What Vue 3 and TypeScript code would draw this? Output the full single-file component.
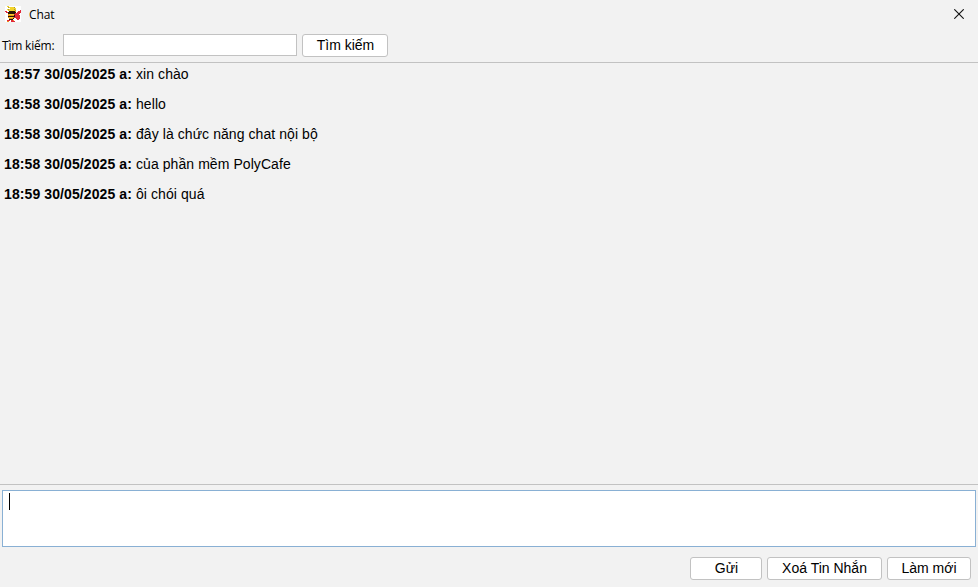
<script setup lang="ts">
import { ref } from 'vue'

interface Message {
  time: string
  sender: string
  text: string
}

const keyword = ref('')

const messages: Message[] = [
  { time: '18:57 30/05/2025', sender: 'a', text: 'xin chào' },
  { time: '18:58 30/05/2025', sender: 'a', text: 'hello' },
  { time: '18:58 30/05/2025', sender: 'a', text: 'đây là chức năng chat nội bộ' },
  { time: '18:58 30/05/2025', sender: 'a', text: 'của phần mềm PolyCafe' },
  { time: '18:59 30/05/2025', sender: 'a', text: 'ôi chói quá' },
]

// 16x16 pixel mascot: a bee with sunglasses and a red cape
const sprite: string[] = [
  '..yy............',
  '...gyyyyyg......',
  '.....yyyyyy.....',
  '..ygyyyyygy.....',
  '...yyyyyyyg....r',
  'rr..kkkkkko..rrr',
  '.rrkkkkkkkk.rrrr',
  '...kkkkkkkrrrrr.',
  '...oyyyyyrrrrr..',
  '...ooooookrrrrr.',
  '...kkkkkkkrrrrr.',
  '...oyyyyorrrrrr.',
  '....ooook..rrrr.',
  '....kkkk....rr..',
  '..rrr.rro.......',
  '..oo..rrrr......',
]
const palette: Record<string, string> = {
  y: '#f3d32a',
  g: '#a39a3c',
  k: '#2a1608',
  o: '#ee8f1e',
  r: '#e0283a',
}
const pixels = sprite.flatMap((row, y) =>
  [...row].map((c, x) => ({ x, y, fill: palette[c] })).filter((p) => p.fill),
)
</script>

<template>
  <div class="window">
    <header class="titlebar">
      <svg class="logo" width="16" height="16" viewBox="0 0 16 16" shape-rendering="crispEdges">
        <rect width="16" height="16" fill="#fff" />
        <rect v-for="p in pixels" :key="`${p.x}-${p.y}`" :x="p.x" :y="p.y" width="1" height="1" :fill="p.fill" />
      </svg>
      <span class="title">Chat</span>
      <svg class="close" width="10" height="10" viewBox="0 0 10 10">
        <path d="M.3.3l9.4 9.4M9.7.3l-9.4 9.4" stroke="#111" stroke-width="1.1" fill="none" />
      </svg>
    </header>
    <div class="search">
      <label class="label" for="keyword">Tìm kiếm:</label>
      <input id="keyword" v-model="keyword" class="field" type="text" />
      <button class="btn find">Tìm kiếm</button>
    </div>
    <main class="log">
      <p v-for="(m, i) in messages" :key="i" class="message">
        <b class="meta">{{ m.time }} {{ m.sender }}:</b><span class="text">{{ m.text }}</span>
      </p>
    </main>
    <div class="editor"><span class="caret"></span></div>
    <footer class="actions">
      <button class="btn send">Gửi</button>
      <button class="btn clear">Xoá Tin Nhắn</button>
      <button class="btn refresh">Làm mới</button>
    </footer>
  </div>
</template>

<style>
body {
  background: #f2f2f2;
}
</style>

<style scoped>
.window {
  box-sizing: border-box;
  width: 978px;
  height: 587px;
  display: flex;
  flex-direction: column;
  overflow: hidden;
  background: #f2f2f2;
  color: #000;
  font: 14px "Liberation Sans", Arial, sans-serif;
}
.titlebar {
  height: 29px;
  flex: none;
  display: flex;
  align-items: flex-start;
  box-sizing: border-box;
  padding: 6px 14px 0 5px;
}
.logo {
  display: block;
}
.title {
  margin-left: 8px;
  font: 12px/17px "Open Sans", "Noto Sans", sans-serif;
  letter-spacing: -0.1px;
}
.close {
  display: block;
  margin: 3px 0 0 auto;
}
.search {
  height: 33px;
  flex: none;
  display: flex;
  align-items: flex-start;
  box-sizing: border-box;
  padding: 5px 0 0 2px;
}
.label {
  width: 61px;
  font: 12px/24px "Open Sans", "Noto Sans", sans-serif;
  letter-spacing: -0.2px;
  white-space: nowrap;
}
.field {
  box-sizing: border-box;
  width: 234px;
  height: 22px;
  margin: 0 5px 0 0;
  padding: 0 4px;
  border: 1px solid #c2c2c2;
  border-radius: 0;
  background: #fff;
  outline: none;
}
.btn {
  box-sizing: border-box;
  height: 23px;
  margin: 0;
  padding: 0 0 1px;
  border: 1px solid #c2c2c2;
  border-radius: 3px;
  background: #fff;
  color: #000;
  font: 14px/20px "Liberation Sans", Arial, sans-serif;
  white-space: nowrap;
}
.find {
  width: 86px;
  padding-left: 1px;
}
.log {
  height: 423px;
  flex: none;
  box-sizing: border-box;
  padding: 3px 4px 0;
  border-top: 1px solid #c2c2c2;
  border-bottom: 1px solid #c2c2c2;
}
.message {
  margin: 0 0 14px;
  height: 16px;
  line-height: 16px;
  display: flex;
  white-space: nowrap;
}
.meta {
  width: 132px;
  letter-spacing: 0.1px;
}
.text {
  letter-spacing: 0.07px;
}
.editor {
  flex: none;
  box-sizing: border-box;
  height: 57px;
  margin: 5px 2px 0;
  padding: 2px 6px;
  border: 1px solid #89b0d4;
  background: #fff;
}
.caret {
  display: block;
  width: 1px;
  height: 17px;
  background: #000;
}
.actions {
  display: flex;
  justify-content: flex-end;
  gap: 5px;
  padding: 10px 7px 0 0;
}
.send {
  width: 72px;
  padding-left: 1px;
}
.clear {
  width: 115px;
}
.refresh {
  width: 84px;
}
</style>
